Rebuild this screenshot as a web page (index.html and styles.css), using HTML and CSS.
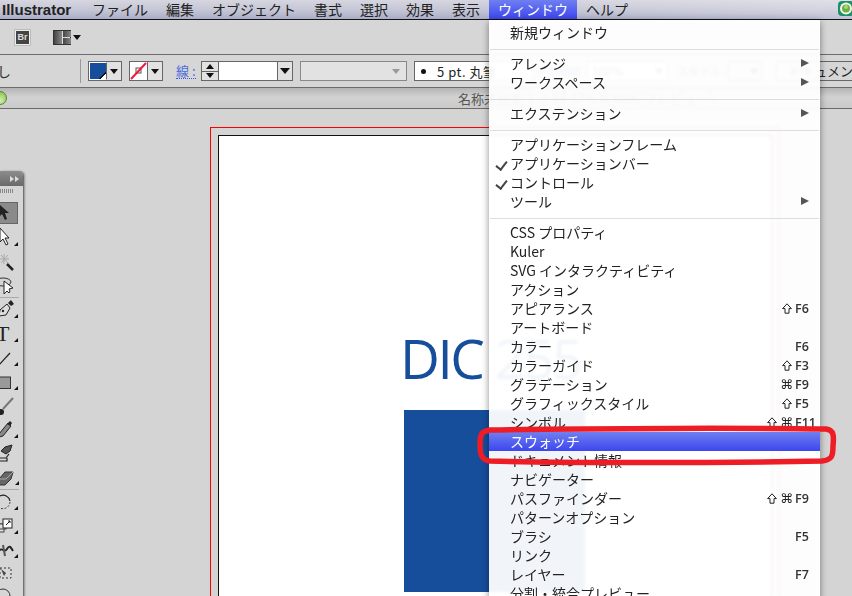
FILE: index.html
```html
<!DOCTYPE html>
<html lang="ja">
<head>
  <meta charset="UTF-8">
  <meta name="viewport" content="width=device-width, initial-scale=1.0">
  <title>Illustrator</title>
  <link rel="stylesheet" href="styles.css">
</head>
<body>
  <!-- Shift key glyph, reused by the menu shortcuts -->
  <svg class="defs" width="0" height="0">
    <symbol id="shift" viewBox="0 0 10 11">
      <path d="M5 0.8 L9.4 5.6 H7 V10.2 H3 V5.6 H0.6 Z" fill="none" stroke="#222" stroke-width="1"/>
    </symbol>
  </svg>

  <!-- Menu bar -->
  <div class="menubar">
    <span class="app-name">Illustrator</span>
    <span class="menu-title">ファイル</span>
    <span class="menu-title">編集</span>
    <span class="menu-title">オブジェクト</span>
    <span class="menu-title">書式</span>
    <span class="menu-title">選択</span>
    <span class="menu-title">効果</span>
    <span class="menu-title">表示</span>
    <span class="menu-title active">ウィンドウ</span>
    <span class="menu-title">ヘルプ</span>
    <svg class="status-icon" width="15" height="18" viewBox="0 0 15 18">
      <rect x="1" y="1" width="16" height="15" rx="4" fill="#1f8f6a"/>
      <circle cx="9" cy="8.5" r="6" fill="#f2f7ee"/>
      <circle cx="9" cy="8.5" r="4" fill="#6fb03a"/>
      <circle cx="9" cy="7" r="2" fill="#a8d47c"/>
    </svg>
  </div>

  <!-- Application bar -->
  <div class="appbar">
    <span class="br-icon">Br</span>
    <span class="layout-icon"><i></i><i></i><i></i></span>
    <span class="tri"></span>
  </div>

  <!-- Control bar -->
  <div class="control">
    <span class="ctl-label">し</span>
    <span class="ctl-sep"></span>
    <span class="swatch-box">
      <span class="swatch swatch-fill"></span>
      <span class="drop"><span class="tri"></span></span>
    </span>
    <span class="swatch-box">
      <span class="swatch swatch-none">
        <svg width="17" height="18" viewBox="0 0 17 18">
          <rect x="6" y="6" width="5" height="5" fill="none" stroke="#555"/>
          <line x1="1" y1="17" x2="16" y2="1" stroke="#f0183c" stroke-width="2"/>
        </svg>
      </span>
      <span class="drop"><span class="tri"></span></span>
    </span>
    <span class="stroke-link">線 :</span>
    <span class="stroke-field">
      <span class="spin"><span class="tri up"></span><span class="tri"></span></span>
      <span class="stroke-input"></span>
      <span class="drop"><span class="tri big"></span></span>
    </span>
    <span class="dash-field"><span class="tri pale"></span></span>
    <span class="brush-field"><span class="dot"></span>5 pt. 丸筆</span>
    <span class="opacity-label">不透明度 :</span>
    <span class="opacity-field">100%<span class="tri"></span></span>
    <span class="style-label">スタイル :</span>
    <span class="style-field"><span class="tri"></span></span>
    <span class="doc-field">ドキュメント</span>
  </div>

  <!-- Document tab -->
  <div class="doctab">
    <span class="tab-dot"></span>
    <span class="tab-title">名称未設定-1 @ 66.67% (CMYK/プレビュー)</span>
  </div>

  <div class="workspace">
    <!-- Artboard -->
    <div class="bleed">
      <div class="artboard">
        <div class="dic-text">DIC 255</div>
        <div class="dic-swatch"></div>
      </div>
    </div>

    <!-- Tools panel -->
    <div class="tools">
      <div class="tools-head"><span class="tri-right"></span><span class="tri-right"></span></div>
      <div class="tools-grip"></div>
      <div class="tool selected">
        <svg width="18" height="22" viewBox="0 0 18 22"><path d="M-1 1 L-1 14 L2 11 L5 17 L7 16 L5 10 L9 10 Z" fill="#222"/></svg>
      </div>
      <div class="tool more">
        <svg width="23" height="24" viewBox="0 0 23 24"><path d="M0 2 L0 16 L3 13 L6 19 L8 18 L5 12 L9 12 Z" fill="#fff" stroke="#222"/></svg>
      </div>
      <div class="tool">
        <svg width="23" height="24" viewBox="0 0 23 24"><path d="M7 14 L13 20" stroke="#222" stroke-width="2.5"/><path d="M0 9 H9 M4 4 V14 M1 5 L8 13 M8 5 L1 13" stroke="#aaa"/></svg>
      </div>
      <div class="tool sep">
        <svg width="23" height="24" viewBox="0 0 23 24"><ellipse cx="3" cy="8" rx="8" ry="4" fill="none" stroke="#333"/><path d="M4 7 V20 L7 17 L9 19 L10 17 L9 15 L13 14 Z" fill="#fff" stroke="#222"/></svg>
      </div>
      <div class="tool more">
        <svg width="23" height="24" viewBox="0 0 23 24"><path d="M0 12 L7 6 L10 10 L6 17 L-1 18 Z" fill="#ddd" stroke="#222"/><path d="M8 5 L11 2 L14 6 L11 8 Z" fill="#222"/><circle cx="3" cy="13" r="1.2" fill="#222"/></svg>
      </div>
      <div class="tool more">
        <span class="type-tool">T</span>
      </div>
      <div class="tool more">
        <svg width="23" height="24" viewBox="0 0 23 24"><line x1="-1" y1="19" x2="10" y2="7" stroke="#222" stroke-width="1.2"/></svg>
      </div>
      <div class="tool more">
        <svg width="23" height="24" viewBox="0 0 23 24"><rect x="-2" y="7" width="12.5" height="11.5" fill="#999" stroke="#333"/></svg>
      </div>
      <div class="tool">
        <svg width="23" height="24" viewBox="0 0 23 24"><path d="M3 15 L13 4" stroke="#777" stroke-width="2"/><circle cx="1" cy="18" r="3" fill="#222"/></svg>
      </div>
      <div class="tool more">
        <svg width="23" height="24" viewBox="0 0 23 24"><path d="M-1 16 L8 5 L11 8 L3 18 L-1 19 Z" fill="#888" stroke="#222"/><path d="M7 6 L10 3 L12 5 L10 8 Z" fill="#222"/></svg>
      </div>
      <div class="tool">
        <svg width="23" height="24" viewBox="0 0 23 24"><path d="M1 9 L5 5 L12 3 L10 9 L6 12 Z" fill="#555" stroke="#222"/><path d="M-1 16 H6 L9 12 M-1 19 H7 V16" fill="none" stroke="#222" stroke-width="1.2"/></svg>
      </div>
      <div class="tool more sep">
        <svg width="23" height="24" viewBox="0 0 23 24"><path d="M-1 13 L5 6 L13 6 L11 13 L5 19 L-1 19 Z" fill="#666" stroke="#333"/><path d="M-1 13 H6 L13 6" fill="none" stroke="#aaa"/></svg>
      </div>
      <div class="tool more">
        <svg width="23" height="24" viewBox="0 0 23 24"><path d="M0 6 A7 7 0 0 1 10 11" fill="none" stroke="#222" stroke-width="1.2"/><path d="M10 12 A7 7 0 0 1 0 18" fill="none" stroke="#444" stroke-dasharray="2 1.5"/></svg>
      </div>
      <div class="tool more">
        <svg width="23" height="24" viewBox="0 0 23 24"><rect x="-1" y="10" width="5" height="8" fill="#ddd" stroke="#444"/><rect x="-1" y="10" width="7" height="5" fill="#ddd" stroke="#444"/><rect x="3" y="5" width="9" height="9" fill="#fff" stroke="#222"/><path d="M6 11 L10 7 M8 7 H10 V9" stroke="#222" fill="none"/></svg>
      </div>
      <div class="tool more">
        <svg width="23" height="24" viewBox="0 0 23 24"><path d="M-1 13 C2 8 4 16 7 11 S11 10 13 13" fill="none" stroke="#222" stroke-width="2"/><path d="M3 7 L5 18" stroke="#555" stroke-width="2"/></svg>
      </div>
      <div class="tool">
        <svg width="23" height="24" viewBox="0 0 23 24"><rect x="0" y="6" width="11" height="10" fill="none" stroke="#333" stroke-dasharray="2 2"/><path d="M1 7 L6 11 L4 14 Z" fill="#444"/></svg>
      </div>
      <div class="tool">
        <svg width="23" height="24" viewBox="0 0 23 24"><circle cx="3" cy="10" r="7" fill="none" stroke="#333"/></svg>
      </div>
    </div>
  </div>

  <!-- Window menu -->
  <div class="menu">
    <div class="row"><span class="label">新規ウィンドウ</span></div>
    <div class="menu-sep"></div>
    <div class="row sub"><span class="label">アレンジ</span></div>
    <div class="row sub"><span class="label">ワークスペース</span></div>
    <div class="menu-sep"></div>
    <div class="row sub"><span class="label">エクステンション</span></div>
    <div class="menu-sep"></div>
    <div class="row"><span class="label">アプリケーションフレーム</span></div>
    <div class="row checked"><span class="label">アプリケーションバー</span></div>
    <div class="row checked"><span class="label">コントロール</span></div>
    <div class="row sub"><span class="label">ツール</span></div>
    <div class="menu-sep"></div>
    <div class="row"><span class="label">CSS プロパティ</span></div>
    <div class="row"><span class="label">Kuler</span></div>
    <div class="row"><span class="label">SVG インタラクティビティ</span></div>
    <div class="row"><span class="label">アクション</span></div>
    <div class="row"><span class="label">アピアランス</span><svg class="shift"><use href="#shift"/></svg><span class="key">F6</span></div>
    <div class="row"><span class="label">アートボード</span></div>
    <div class="row"><span class="label">カラー</span><span class="key">F6</span></div>
    <div class="row"><span class="label">カラーガイド</span><svg class="shift"><use href="#shift"/></svg><span class="key">F3</span></div>
    <div class="row"><span class="label">グラデーション</span><span class="mods">⌘</span><span class="key">F9</span></div>
    <div class="row"><span class="label">グラフィックスタイル</span><svg class="shift"><use href="#shift"/></svg><span class="key">F5</span></div>
    <div class="row"><span class="label">シンボル</span><svg class="shift"><use href="#shift"/></svg><span class="mods">⌘</span><span class="key">F11</span></div>
    <div class="row highlighted"><span class="label">スウォッチ</span></div>
    <div class="row"><span class="label">ドキュメント情報</span></div>
    <div class="row"><span class="label">ナビゲーター</span></div>
    <div class="row"><span class="label">パスファインダー</span><svg class="shift"><use href="#shift"/></svg><span class="mods">⌘</span><span class="key">F9</span></div>
    <div class="row"><span class="label">パターンオプション</span></div>
    <div class="row"><span class="label">ブラシ</span><span class="key">F5</span></div>
    <div class="row"><span class="label">リンク</span></div>
    <div class="row"><span class="label">レイヤー</span><span class="key">F7</span></div>
    <div class="row"><span class="label">分割・統合プレビュー</span></div>
  </div>

  <!-- Hand drawn red mark over the menu -->
  <svg class="red-mark" width="852" height="596" viewBox="0 0 852 596">
    <path d="M490 430 C600 428 760 428 826 429 C834 430 834 436 833 446 C833 456 832 460 822 461 C720 463 560 463 490 461 C481 460 480 454 480 444 C480 434 482 431 490 430 Z" fill="none" stroke="#ee1c25" stroke-width="5.5"/>
  </svg>
</body>
</html>
```

FILE: styles.css
```css
* {
  margin: 0;
  padding: 0;
  box-sizing: border-box;
}

body {
  font-family: "Noto Sans CJK JP", "Liberation Sans", sans-serif;
  background-color: #d4d4d4;
  color: #222;
  width: 852px;
  height: 596px;
  position: relative;
  overflow: hidden;
  display: flex;
  flex-direction: column;
}

.defs {
  position: absolute;
}

.tri {
  display: inline-block;
  width: 0;
  height: 0;
  border-left: 4px solid transparent;
  border-right: 4px solid transparent;
  border-top: 5px solid #111;
}

.tri.up {
  border-top: 0;
  border-bottom: 5px solid #111;
}

.tri.big {
  border-left-width: 5px;
  border-right-width: 5px;
  border-top-width: 6px;
}

.tri.pale {
  border-top-color: #999;
}

/* Menu bar */
.menubar {
  height: 20px;
  flex: none;
  display: flex;
  align-items: center;
  border-bottom: 1px solid #111;
  background: linear-gradient(90deg, rgba(255, 255, 255, 0) 60%, rgba(255, 255, 255, 0.25) 100%),
    linear-gradient(#d6d6e0, #c6c7d6 50%, #abadc8);
  font-size: 14px;
  color: #222;
  position: relative;
}

.app-name {
  font-family: "Liberation Sans", sans-serif;
  font-weight: bold;
  font-size: 15px;
  margin-left: 2px;
  width: 81px;
}

.menu-title {
  padding: 0 9px;
  height: 19px;
  line-height: 19px;
}

.menu-title.active {
  color: #fff;
  background: linear-gradient(#6f7ff0, #3c46ee);
}

.status-icon {
  position: absolute;
  right: 0;
  top: 0;
}

/* Application bar */
.appbar {
  height: 34px;
  flex: none;
  display: flex;
  align-items: center;
  padding: 1px 0 0 15px;
  background-color: #d6d6d6;
}

.br-icon {
  width: 15px;
  height: 15px;
  background-color: #444;
  border: 1px solid #eee;
  outline: 1px solid #bbb;
  color: #ddd;
  font: bold 9px/13px "Liberation Sans", sans-serif;
  text-align: center;
  margin-right: 23px;
}

.layout-icon {
  width: 18px;
  height: 15px;
  border: 1px solid #333;
  display: grid;
  grid-template-columns: 8px 8px;
  grid-template-rows: 6px 6px;
  gap: 1px;
  background-color: #ddd;
  margin-right: 2px;
}

.layout-icon i {
  background: linear-gradient(90deg, #444, #888);
}

.layout-icon i:first-child {
  grid-row: span 2;
}

/* Control bar */
.control {
  height: 34px;
  flex: none;
  display: flex;
  align-items: center;
  border-top: 1px solid #6b6b6b;
  border-bottom: 1px solid #6b6b6b;
  background-color: #d6d6d6;
  white-space: nowrap;
  font-size: 13px;
}

.ctl-label {
  width: 80px;
  flex: none;
  color: #333;
  font-size: 14px;
  text-indent: -3px;
}

.ctl-sep {
  width: 1px;
  height: 24px;
  background-color: #999;
  margin-right: 7px;
  flex: none;
}

.swatch-box {
  width: 34px;
  height: 20px;
  border: 1px solid #666;
  display: flex;
  margin-right: 7px;
  background-color: #e2e2e2;
  flex: none;
}

.swatch {
  width: 18px;
  background-color: #fff;
  border-right: 1px solid #666;
  flex: none;
}

.swatch svg {
  display: block;
}

.swatch-fill {
  background: linear-gradient(135deg, #164e9c 0 78%, #111 78% 82%, #fff 82%);
  border: 1px solid #fff;
  border-right: 1px solid #666;
}

.drop {
  flex: 1;
  display: flex;
  align-items: center;
  justify-content: center;
}

.stroke-link {
  width: 20px;
  margin-left: 6px;
  color: #4a6ae0;
  font-size: 13px;
  line-height: 15px;
  border-bottom: 1px dotted #3c5ad8;
  flex: none;
}

.stroke-field {
  width: 92px;
  height: 20px;
  border: 1px solid #666;
  display: flex;
  margin-left: 5px;
  background-color: #e2e2e2;
  flex: none;
}

.spin {
  width: 17px;
  display: flex;
  flex-direction: column;
  align-items: center;
  justify-content: space-around;
  border-right: 1px solid #666;
  background: linear-gradient(#666, #666) 0 50% / 100% 1px no-repeat;
  flex: none;
}

.stroke-input {
  width: 59px;
  background-color: #fff;
  border-right: 1px solid #666;
  flex: none;
}

.dash-field {
  width: 107px;
  height: 20px;
  border: 1px solid #888;
  margin-left: 7px;
  background-color: #e2e2e2;
  display: flex;
  align-items: center;
  justify-content: flex-end;
  padding-right: 6px;
  flex: none;
}

.brush-field {
  width: 120px;
  height: 20px;
  border: 1px solid #666;
  margin-left: 7px;
  background-color: #fff;
  display: flex;
  align-items: center;
  padding-left: 6px;
  font-size: 13px;
  letter-spacing: 0.5px;
  flex: none;
}

.dot {
  width: 5px;
  height: 5px;
  border-radius: 50%;
  background-color: #111;
  margin-right: 11px;
}

.opacity-label {
  margin-left: 3px;
  font-size: 11px;
  color: #3c5ad8;
  width: 50px;
  flex: none;
}

.opacity-field {
  width: 81px;
  height: 20px;
  border: 1px solid #666;
  background-color: #fff;
  font-size: 12px;
  padding: 0 4px;
  line-height: 18px;
  display: flex;
  align-items: center;
  justify-content: space-between;
  flex: none;
}

.style-label {
  margin-left: 9px;
  font-size: 11px;
  width: 51px;
  color: #333;
  flex: none;
}

.style-field {
  width: 34px;
  height: 20px;
  border: 1px solid #666;
  margin-right: 14px;
  display: flex;
  align-items: center;
  justify-content: flex-end;
  padding-right: 3px;
  flex: none;
}

.doc-field {
  border: 1px solid #666;
  border-right: 0;
  height: 20px;
  line-height: 18px;
  font-size: 13px;
  padding-left: 11px;
  flex: none;
}

/* Document tab */
.doctab {
  height: 21px;
  flex: none;
  border-bottom: 1px solid #6b6b6b;
  background: linear-gradient(#b4b4b4, #d2d2d2 45%, #cacaca);
  display: flex;
  align-items: center;
  position: relative;
  font-size: 13px;
  color: #555;
}

.tab-dot {
  position: absolute;
  left: -7px;
  top: 3px;
  width: 14px;
  height: 14px;
  border-radius: 50%;
  border: 1px solid #4a8a2c;
  background: radial-gradient(circle at 50% 70%, #d6f0b0, #7dbb45);
}

.tab-title {
  margin-left: 458px;
  white-space: nowrap;
}

/* Canvas */
.workspace {
  flex: 1;
  position: relative;
  overflow: hidden;
  background-color: #d4d4d4;
}

.bleed {
  position: absolute;
  left: 210px;
  top: 18px;
  width: 570px;
  height: 600px;
  border: 1px solid #f00;
  padding: 7px;
}

.artboard {
  width: 554px;
  height: 600px;
  background-color: #fff;
  border: 1px solid #111;
  padding: 192px 0 0 185px;
}

.dic-text {
  font-family: "Open Sans", sans-serif;
  font-weight: 400;
  font-size: 55px;
  line-height: 60px;
  letter-spacing: -2.5px;
  margin-left: -4px;
  color: #164e9c;
  white-space: nowrap;
}

.dic-swatch {
  width: 181px;
  height: 182px;
  margin-top: 22px;
  background-color: #164e9c;
}

/* Tools panel */
.tools {
  position: absolute;
  left: 0;
  top: 62px;
  width: 24px;
  height: 440px;
  background-color: #d6d6d6;
  border-right: 1px solid #707070;
  box-shadow: 1px 0 2px rgba(0, 0, 0, 0.3);
  border-top-right-radius: 5px;
  overflow: hidden;
}

.tools-head {
  height: 15px;
  background: linear-gradient(#8c8c8c, #6a6a6a);
  display: flex;
  align-items: center;
  justify-content: flex-end;
  padding-right: 4px;
  gap: 1px;
}

.tri-right {
  width: 0;
  height: 0;
  border-top: 3px solid transparent;
  border-bottom: 3px solid transparent;
  border-left: 4px solid #ddd;
}

.tools-grip {
  height: 13px;
  margin-top: 3px;
  background: repeating-linear-gradient(90deg, #888 0 1px, transparent 1px 2px) 0 0 / 13px 4px no-repeat;
}

.tool {
  height: 24px;
  position: relative;
}

.tool svg {
  display: block;
  overflow: visible;
}

.tool.selected {
  height: 22px;
  margin-bottom: 2px;
  width: 18px;
  background-color: #8a8a8a;
  border: 1px solid #666;
  border-left: 0;
}

.tool.sep {
  border-bottom: 1px solid #aaa;
  width: 19px;
}

.tool.more::after {
  content: "";
  position: absolute;
  right: 5px;
  bottom: 4px;
  width: 0;
  height: 0;
  border-left: 4px solid transparent;
  border-bottom: 4px solid #111;
}

.tool.more.sep::after {
  right: 0;
}

.type-tool {
  font-family: "Liberation Serif", serif;
  font-size: 22px;
  line-height: 24px;
  color: #222;
  margin-left: -4px;
  display: block;
}

/* Window menu */
.menu {
  position: absolute;
  left: 489px;
  top: 20px;
  width: 331px;
  height: 600px;
  padding-top: 3px;
  background: rgba(255, 255, 255, 0.94);
  backdrop-filter: blur(1.5px);
  box-shadow: 0 2px 7px rgba(0, 0, 0, 0.45);
  font-size: 14px;
  color: #222;
}

.row {
  height: 19px;
  line-height: 19px;
  display: flex;
  align-items: center;
  padding: 0 13px 0 21px;
  position: relative;
  white-space: nowrap;
}

.label {
  flex: 1;
}

.row.checked::before {
  content: "";
  position: absolute;
  left: 9px;
  top: 5px;
  width: 5px;
  height: 9px;
  border: solid #444;
  border-width: 0 2px 2px 0;
  transform: rotate(38deg);
}

.row.sub::after {
  content: "";
  position: absolute;
  right: 11px;
  top: 5px;
  width: 0;
  height: 0;
  border-top: 4.5px solid transparent;
  border-bottom: 4.5px solid transparent;
  border-left: 8px solid #555;
}

.row.highlighted {
  color: #fff;
  background: linear-gradient(#6f7ff0, #3c46ee);
}

.menu-sep {
  height: 12px;
  position: relative;
}

.menu-sep::after {
  content: "";
  position: absolute;
  left: 1px;
  right: 1px;
  top: 7px;
  height: 1px;
  background-color: #ddd;
}

.shift {
  width: 10px;
  height: 11px;
  margin-right: 3px;
  flex: none;
}

.mods {
  font-family: "DejaVu Sans", sans-serif;
  font-size: 13px;
  margin-right: 2px;
  color: #222;
}

.key {
  width: 12px;
  font-family: "Open Sans", sans-serif;
  font-weight: 600;
  font-size: 12.5px;
  color: #333;
}

.red-mark {
  position: absolute;
  left: 0;
  top: 0;
  pointer-events: none;
}
```
